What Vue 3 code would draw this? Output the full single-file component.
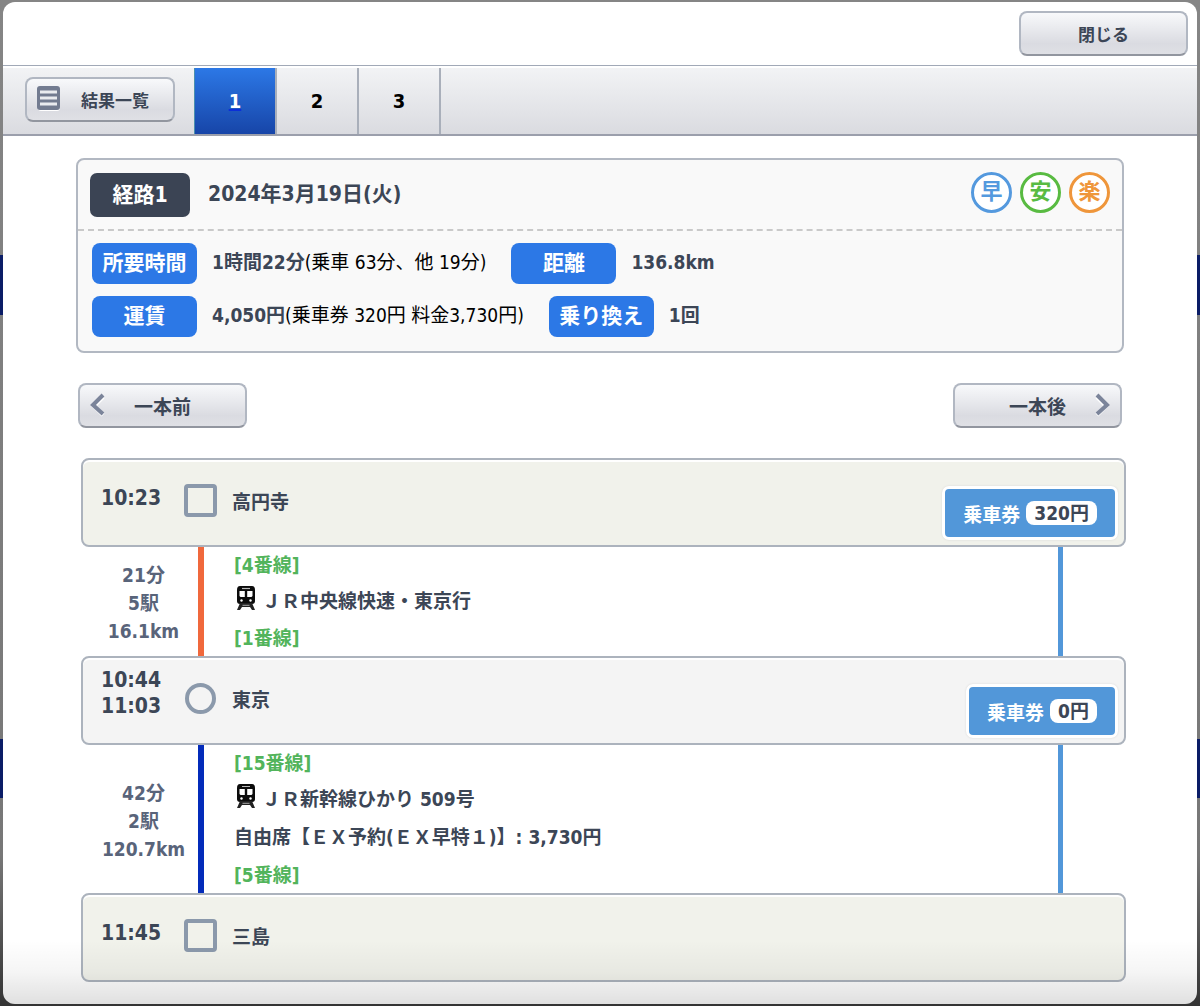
<template>
  <div class="backdrop">
    <main class="modal">
      <header class="modal-header">
        <button type="button" class="button button-wide button-small">閉じる</button>
      </header>

      <nav class="tab-bar" aria-label="検索結果">
        <button type="button" class="button button-list">
          <svg class="list-icon" viewBox="0 0 24 26" aria-hidden="true">
            <rect x="1" y="2" width="22" height="23" rx="3" fill="#fff" />
            <rect x="0" y="0" width="23" height="24" rx="3" fill="#727b90" />
            <path d="M3 6h17M3 12h17M3 18h17" stroke="#e9ebef" stroke-width="3" />
          </svg>
          <span>結果一覧</span>
        </button>
        <div class="tabs">
          <a
            v-for="tab in tabs"
            :key="tab"
            href="#"
            class="tab"
            :class="{ active: tab === activeTab }"
            @click.prevent="activeTab = tab"
          ><span>{{ tab }}</span></a>
        </div>
      </nav>

      <section class="summary">
        <div class="summary-header">
          <h1 class="route-badge">経路1</h1>
          <span class="route-date">2024年3月19日(火)</span>
          <div class="marks">
            <span v-for="mark in marks" :key="mark.key" class="mark" :class="mark.key">{{ mark.label }}</span>
          </div>
        </div>
        <div class="summary-body">
          <div v-for="(row, index) in summaryRows" :key="index" class="summary-row">
            <div v-for="item in row" :key="item.label" class="summary-item">
              <span class="summary-label">{{ item.label }}</span>
              <span class="summary-value"><b>{{ item.value }}</b>{{ item.note }}</span>
            </div>
          </div>
        </div>
      </section>

      <div class="pager">
        <button type="button" class="button button-wide">
          <svg class="chevron chevron-left" viewBox="0 0 16 24" aria-hidden="true">
            <path d="M13 4 4 13l9 9" stroke="#fff" />
            <path d="M13 2 3 12l10 9" stroke="#7b849a" />
          </svg>
          一本前
        </button>
        <button type="button" class="button button-wide">
          一本後
          <svg class="chevron chevron-right" viewBox="0 0 16 24" aria-hidden="true">
            <path d="m3 4 9 9-9 9" stroke="#fff" />
            <path d="m3 2 10 10-10 9" stroke="#7b849a" />
          </svg>
        </button>
      </div>

      <section class="route">
        <template v-for="stop in stops" :key="stop.name">
          <div class="station" :class="{ transfer: stop.transfer }">
            <div class="times" :class="{ double: stop.times.length > 1 }">
              <time v-for="time in stop.times" :key="time">{{ time }}</time>
            </div>
            <span class="station-mark"></span>
            <h2 class="station-name">{{ stop.name }}</h2>
            <div v-if="stop.fare" class="fare">乗車券<span class="fare-price">{{ stop.fare }}</span></div>
          </div>

          <div v-if="stop.leg" class="leg">
            <div class="leg-info">
              <span v-for="text in stop.leg.info" :key="text">{{ text }}</span>
            </div>
            <div class="leg-line" :class="stop.leg.line"></div>
            <div class="leg-body">
              <p class="platform">[{{ stop.leg.from }}]</p>
              <p class="train">
                <svg class="train-icon" viewBox="0 0 20 25" aria-hidden="true">
                  <path d="M4 0h12q3 0 3 4v11q0 3-3 3H4q-3 0-3-3V4q0-4 3-4z" fill="#0c0c0c" />
                  <path d="M6 2.500h8" stroke="#bbb" stroke-width="1.200" />
                  <path d="M3.500 5h5.300v6H4.500l-1-1zM11.200 5h5.300v5l-1 1h-4.300z" fill="#fff" />
                  <circle cx="5.500" cy="14.500" r="1.200" fill="#fff" />
                  <circle cx="14.500" cy="14.500" r="1.200" fill="#fff" />
                  <path d="M4 17h12l3 7h-3l-2-3H6l-2 3H1z" fill="#222" />
                  <path d="M6.500 19.300h7" stroke="#aaa" />
                </svg>
                <span>{{ stop.leg.train }}</span>
              </p>
              <p v-if="stop.leg.seat" class="seat">{{ stop.leg.seat }}</p>
              <p class="platform">[{{ stop.leg.to }}]</p>
            </div>
            <div class="fare-line"></div>
          </div>
        </template>
      </section>

      <div class="fade"></div>
    </main>
  </div>
</template>

<script setup>
import { ref } from 'vue'

const tabs = [1, 2, 3]
const activeTab = ref(1)

const marks = [
  { key: 'fast', label: '早' },
  { key: 'cheap', label: '安' },
  { key: 'easy', label: '楽' }
]

const summaryRows = [
  [
    { label: '所要時間', value: '1時間22分', note: '(乗車 63分、他 19分)' },
    { label: '距離', value: '136.8km', note: '' }
  ],
  [
    { label: '運賃', value: '4,050円', note: '(乗車券 320円 料金3,730円)' },
    { label: '乗り換え', value: '1回', note: '' }
  ]
]

const stops = [
  {
    name: '高円寺',
    times: ['10:23'],
    fare: '320円',
    leg: {
      info: ['21分', '5駅', '16.1km'],
      line: 'rapid',
      from: '4番線',
      to: '1番線',
      train: 'ＪＲ中央線快速・東京行'
    }
  },
  {
    name: '東京',
    times: ['10:44', '11:03'],
    transfer: true,
    fare: '0円',
    leg: {
      info: ['42分', '2駅', '120.7km'],
      line: 'shinkansen',
      from: '15番線',
      to: '5番線',
      train: 'ＪＲ新幹線ひかり 509号',
      seat: '自由席【ＥＸ予約(ＥＸ早特１)】: 3,730円'
    }
  },
  {
    name: '三島',
    times: ['11:45']
  }
]
</script>

<style>
body {
  background: #4c4c4c;
}
</style>

<style scoped>
.backdrop {
  box-sizing: border-box;
  min-height: 100vh;
  padding: 2px 3px 3px;
  background:
    linear-gradient(#0a1c66, #0a1c66) 0 255px / 100% 60px no-repeat,
    linear-gradient(#0a1c66, #0a1c66) 0 739px / 100% 59px no-repeat,
    linear-gradient(#858585, #777 85%, #333);
  font-family: "DejaVu Sans Condensed", "Noto Sans CJK JP", sans-serif;
  font-size: 19px;
  color: #3c4656;
}

.modal {
  position: relative;
  overflow: hidden;
  padding-bottom: 22px;
  border-radius: 12px;
  background: #fff;
}

.modal-header {
  display: flex;
  justify-content: flex-end;
  padding: 9px;
  border-bottom: 1px solid #a1a9b7;
}

.button {
  position: relative;
  box-sizing: border-box;
  height: 45px;
  border: 2px solid #b1b7c2;
  border-bottom-color: #92969f;
  border-radius: 8px;
  background: linear-gradient(#f8f9fb, #dadbe1 75%, #dfe0e5);
  font-family: inherit;
  font-size: 19px;
  font-weight: 700;
  color: #3c4656;
  cursor: pointer;
}

.button-wide {
  width: 169px;
}

.button-small,
.button-list {
  font-size: 17px;
}

.button-list {
  display: flex;
  align-items: center;
  gap: 20px;
  width: 150px;
  margin-bottom: 4px;
  padding: 0 10px;
}

.list-icon {
  width: 24px;
  height: 26px;
  flex: none;
}

.button-list span {
  white-space: nowrap;
}

.tab-bar {
  display: flex;
  align-items: center;
  gap: 19px;
  padding-left: 22px;
  border-top: 2px solid #fff;
  border-bottom: 2px solid #9b9fac;
  background: linear-gradient(#f2f3f5, #dadbe0);
}

.tabs {
  display: flex;
  border-left: 1px solid #4a8fae;
}

.tab {
  box-sizing: border-box;
  width: 82px;
  border-right: 2px solid #a9afba;
  font-size: 20px;
  line-height: 66px;
  font-weight: 700;
  text-align: center;
  color: #000;
  text-decoration: none;
}

.tab.active {
  background: linear-gradient(#2c78e6, #1745a8);
  color: #fff;
  text-decoration: underline #0b2fd8;
}

.summary {
  margin: 22px 73px 0;
  border: 2px solid #b2b8c2;
  border-radius: 8px;
  background: #f9f9f9;
}

.summary-header {
  display: flex;
  align-items: center;
  padding: 12px;
  border-bottom: 2px dashed #c9c9c9;
}

.route-badge {
  width: 100px;
  margin: 0 18px 0 0;
  border-radius: 7px;
  background: #3b4454;
  color: #fff;
  font-size: 21px;
  line-height: 44px;
  text-align: center;
}

.route-date {
  margin-bottom: 2px;
  font-size: 21px;
  line-height: 42px;
  font-weight: 700;
}

.marks {
  display: flex;
  gap: 8px;
  margin: 0 0 4px auto;
}

.mark {
  box-sizing: border-box;
  width: 41px;
  height: 41px;
  border: 3px solid currentColor;
  border-radius: 50%;
  background: #fff;
  font-size: 22px;
  line-height: 34px;
  font-weight: 700;
  text-align: center;
}

.fast {
  color: #5499de;
}

.cheap {
  color: #59bb42;
}

.easy {
  color: #ef963b;
}

.summary-body {
  display: grid;
  gap: 12px;
  padding: 12px 14px 14px;
}

.summary-row {
  display: flex;
  gap: 25px;
}

.summary-item {
  display: flex;
  gap: 15px;
}

.summary-label {
  width: 105px;
  border-radius: 8px;
  background: #2c78e6;
  color: #fff;
  font-size: 21px;
  line-height: 41px;
  font-weight: 700;
  text-align: center;
}

.summary-value {
  line-height: 39px;
  color: #000;
}

.summary-value b {
  color: #3c4656;
}

.pager {
  display: flex;
  justify-content: space-between;
  margin: 30px 75px;
}

.chevron {
  position: absolute;
  top: 8px;
  width: 16px;
  height: 24px;
  fill: none;
  stroke-width: 4;
}

.chevron-left {
  left: 10px;
}

.chevron-right {
  right: 10px;
}

.route {
  margin: 0 71px 0 78px;
  font-weight: 700;
}

.station {
  box-sizing: border-box;
  display: flex;
  align-items: center;
  min-height: 89px;
  padding: 0 6px 0 18px;
  border: 2px solid #acb3bd;
  border-radius: 8px;
  box-shadow: inset 0 2px #fff;
  background: #f1f2eb;
}

.station.transfer {
  background: #f4f4f4;
}

.times {
  display: grid;
  width: 83px;
  margin-bottom: 10px;
  font-size: 21px;
  line-height: 26px;
}

.times.double {
  margin-bottom: 16px;
}

.station-mark {
  box-sizing: border-box;
  width: 33px;
  height: 33px;
  margin-bottom: 4px;
  border: 4px solid #8b99ab;
  border-radius: 4px;
}

.transfer .station-mark {
  width: 31px;
  height: 31px;
  margin-right: 1px;
  margin-left: 1px;
  border-radius: 50%;
}

.station-name {
  margin: 0 0 2px 15px;
  font-size: 19px;
  line-height: 28px;
}

.fare {
  display: flex;
  align-items: center;
  align-self: flex-end;
  gap: 6px;
  height: 48px;
  margin: 0 0 5px auto;
  padding: 0 18px;
  border: 3px solid #fff;
  border-radius: 7px;
  box-shadow: 0 0 2px #d5d5d5;
  background: #5297d9;
  color: #fff;
}

.fare-price {
  padding: 0 8px;
  border-radius: 8px;
  background: #fff;
  color: #3c4656;
  line-height: 24px;
}

.leg {
  display: flex;
  padding-right: 63px;
}

.leg-info {
  box-sizing: border-box;
  display: grid;
  align-content: center;
  width: 117px;
  padding: 3px 0 0 8px;
  color: #59647a;
  line-height: 28px;
  text-align: center;
}

.leg-line {
  width: 6px;
}

.leg-line.rapid {
  background: #f0683c;
}

.leg-line.shinkansen {
  background: #032bba;
}

.leg-body {
  flex: 1;
  padding-left: 30px;
}

.leg-body p {
  margin: 0;
}

.platform {
  color: #52b45b;
  line-height: 36px;
}

.train {
  display: flex;
  gap: 6px;
  line-height: 37px;
}

.train-icon {
  width: 20px;
  height: 25px;
  margin: 3px 0 0 2px;
}

.seat {
  line-height: 39px;
}

.fare-line {
  width: 5px;
  background: #5297d9;
}

.fade {
  position: absolute;
  right: 0;
  bottom: 0;
  left: 0;
  height: 64px;
  background: linear-gradient(transparent, rgba(0, 0, 0, 0.04) 50%, rgba(0, 0, 0, 0.12));
  pointer-events: none;
}
</style>
